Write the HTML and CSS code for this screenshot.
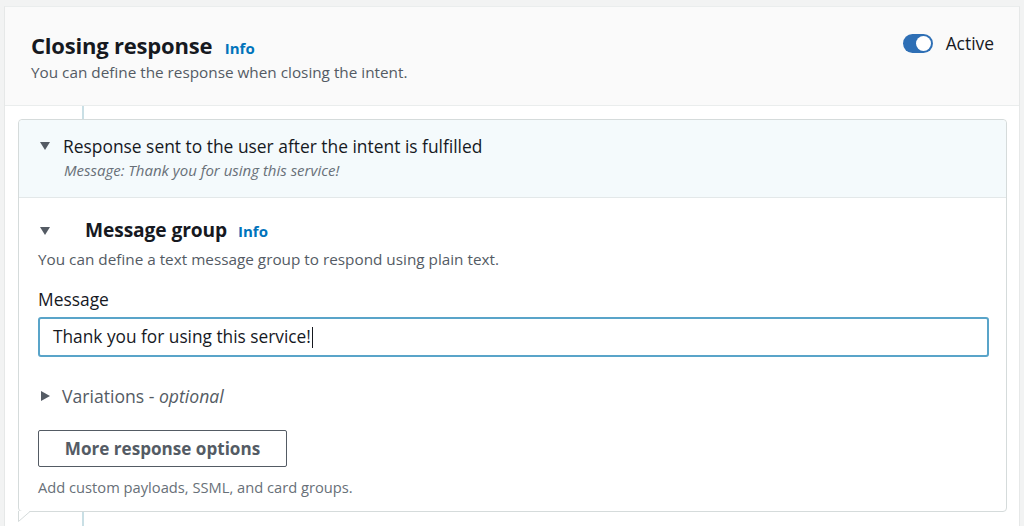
FILE: index.html
```html
<!DOCTYPE html>
<html>
<head>
<meta charset="utf-8">
<link rel="stylesheet" href="styles.css">
</head>
<body>
<div class="page">
  <div class="panel">
    <div class="panel-header">
      <div class="titles">
        <h2 class="title">Closing response <a class="info">Info</a></h2>
        <p class="desc">You can define the response when closing the intent.</p>
      </div>
      <div class="toggle-wrap">
        <span class="toggle"><span class="knob"></span></span>
        <span class="toggle-label">Active</span>
      </div>
    </div>
    <div class="panel-body">
      <div class="line-top"></div>
      <div class="card">
        <div class="card-header">
          <div class="exp-row">
            <span class="caret-down"></span>
            <span class="exp-title">Response sent to the user after the intent is fulfilled</span>
          </div>
          <div class="exp-sub">Message: Thank you for using this service!</div>
        </div>
        <div class="card-body">
          <div class="group-row">
            <span class="caret-down"></span>
            <h3 class="group-title">Message group <a class="info">Info</a></h3>
          </div>
          <p class="group-desc">You can define a text message group to respond using plain text.</p>
          <div class="label">Message</div>
          <div class="input">Thank you for using this service!<span class="cursor"></span></div>
          <div class="variations">
            <span class="caret-right"></span>
            <span>Variations - <em>optional</em></span>
          </div>
          <button class="btn">More response options</button>
          <p class="hint">Add custom payloads, SSML, and card groups.</p>
        </div>
        <svg class="notch" width="13" height="12" viewBox="0 0 13 12">
          <polygon points="0.5,0 0.5,10.5 12,0" fill="#fff"/>
          <polyline points="0.5,0 0.5,10.5 12,0.5" fill="none" stroke="#d5dbdb" stroke-width="1"/>
        </svg>
      </div>
      <div class="line-bottom"></div>
    </div>
  </div>
</div>
</body>
</html>
```

FILE: styles.css
```css
* { box-sizing: border-box; }
html, body { margin: 0; padding: 0; }
body {
  background: #f2f3f3;
  font-family: "Open Sans", "Noto Sans", Arial, sans-serif;
  color: #16191f;
  width: 1024px;
  height: 526px;
  overflow: hidden;
}
.page {
  padding: 6px 4px 0 4px;
  height: 526px;
}
.panel {
  background: #fff;
  border-left: 1px solid #e6e8e8;
  border-right: 1px solid #e6e8e8;
  border-top: 1px solid #eaeded;
  height: 100%;
  width: 1016px;
}
.panel-header {
  background: #fafafa;
  border-bottom: 1px solid #eaeded;
  height: 99px;
  display: flex;
  justify-content: space-between;
  align-items: flex-start;
  padding: 23px 25px 0 26px;
}
.title {
  margin: 0;
  font-size: 22px;
  font-weight: 700;
  line-height: 30px;
  letter-spacing: -0.2px;
}
.info {
  color: #0073bb;
  font-size: 15px;
  font-weight: 700;
  margin-left: 7px;
  letter-spacing: 0;
}
.desc {
  margin: 0;
  font-size: 15.3px;
  line-height: 18px;
  color: #545b64;
}
.toggle-wrap {
  display: flex;
  align-items: center;
  gap: 13px;
  margin-top: 1px;
}
.toggle {
  width: 30px;
  height: 19px;
  border-radius: 10px;
  background: #2e6fb5;
  display: flex;
  align-items: center;
  justify-content: flex-end;
  padding: 0 2px;
}
.knob {
  width: 15px;
  height: 15px;
  border-radius: 50%;
  background: #fff;
}
.toggle-label {
  font-size: 17.4px;
  line-height: 24px;
}
.panel-body {
  padding: 0 13px 0 13px;
}
.line-top {
  width: 2px;
  height: 13px;
  background: #c9dfe5;
  margin-left: 64px;
}
.line-bottom {
  width: 2px;
  height: 20px;
  background: #c9dfe5;
  margin-left: 64px;
}
.card {
  position: relative;
  border: 1px solid #d5dbdb;
  border-radius: 4px;
  width: 989px;
}
.card-header {
  background: #f4fafc;
  border-bottom: 1px solid #e3e8e9;
  border-radius: 4px 4px 0 0;
  height: 78px;
  padding: 14px 0 0 21px;
}
.exp-row, .group-row, .variations {
  display: flex;
  align-items: center;
}
.caret-down {
  width: 0; height: 0;
  border-left: 5.5px solid transparent;
  border-right: 5.5px solid transparent;
  border-top: 8px solid #545b64;
  margin-right: 13px;
}
.caret-right {
  width: 0; height: 0;
  border-top: 5.5px solid transparent;
  border-bottom: 5.5px solid transparent;
  border-left: 9px solid #545b64;
  margin-right: 12px;
}
.exp-title {
  font-size: 17.4px;
  line-height: 24px;
}
.exp-sub {
  font-size: 15px;
  font-style: italic;
  color: #687078;
  line-height: 18px;
  margin: 3px 0 0 24px;
}
.card-body {
  padding: 18px 18px 0 19px;
  height: 313px;
}
.group-row {
  padding-left: 2px;
}
.group-row .caret-down {
  margin-right: 35px;
}
.group-title {
  margin: 0;
  font-size: 19.2px;
  font-weight: 700;
  line-height: 28px;
  letter-spacing: -0.1px;
}
.group-title .info {
  margin-left: 6px;
}
.group-desc {
  margin: 5px 0 0 0;
  font-size: 15.3px;
  line-height: 18px;
  color: #545b64;
}
.label {
  font-size: 17.4px;
  line-height: 22px;
  margin-top: 20px;
}
.input {
  margin-top: 7px;
  height: 40px;
  width: 951px;
  border: 2px solid #59a4c9;
  border-radius: 3px;
  font-size: 17.3px;
  line-height: 36px;
  padding-left: 13px;
  display: flex;
  align-items: center;
}
.cursor {
  display: inline-block;
  width: 1px;
  height: 21px;
  background: #16191f;
  margin-left: 1px;
}
.variations {
  margin-top: 27px;
  padding-left: 3px;
  font-size: 17.6px;
  line-height: 24px;
  color: #545b64;
}
.btn {
  display: block;
  margin-top: 22px;
  width: 249px;
  height: 37px;
  background: #fff;
  border: 1px solid #545b64;
  border-radius: 2px;
  font-family: inherit;
  font-size: 17.1px;
  font-weight: 700;
  color: #545b64;
  padding: 0;
}
.hint {
  margin: 11px 0 0 0;
  font-size: 14.7px;
  line-height: 18px;
  color: #687078;
}
.notch {
  position: absolute;
  left: -1px;
  bottom: -12px;
  display: block;
}
```
